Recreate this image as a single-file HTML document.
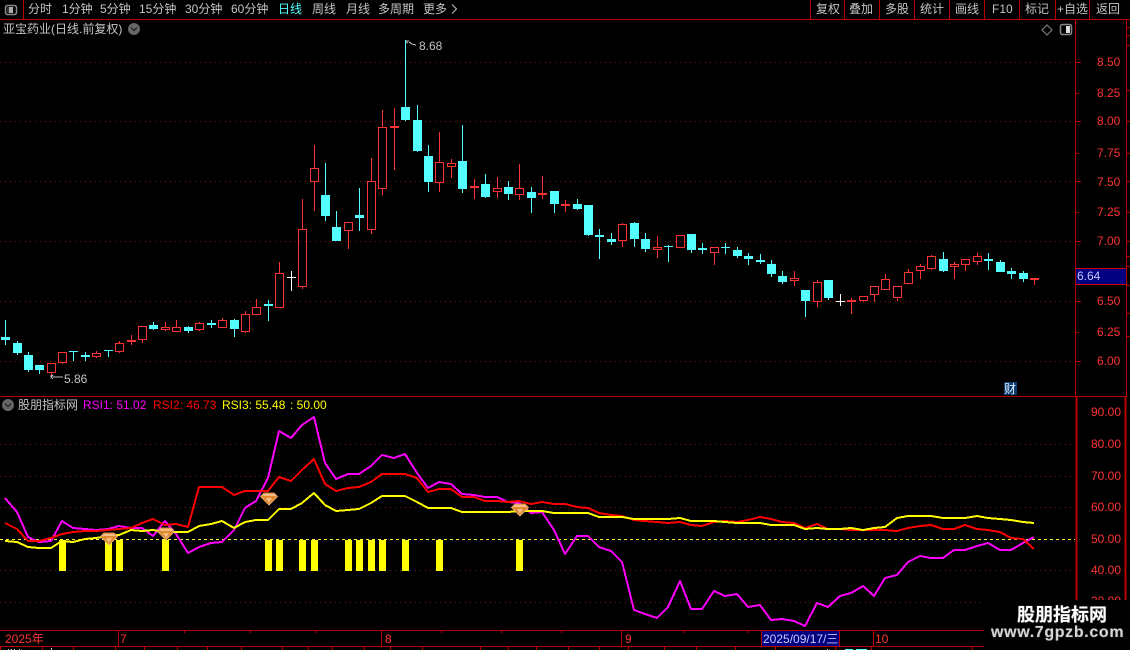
<!DOCTYPE html>
<html><head><meta charset="utf-8"><style>
html,body{margin:0;padding:0;background:#000;width:1130px;height:650px;overflow:hidden}
body{position:relative;font-family:"Liberation Sans","WenQuanYi Zen Hei","Noto Sans CJK SC",sans-serif;font-size:12px;color:#c4c4c4}
.t{position:absolute;white-space:nowrap;line-height:14px;height:14px}
.r{color:#ff3232}
svg{position:absolute;left:0;top:0}
</style></head><body>
<svg width="1130" height="650" viewBox="0 0 1130 650" shape-rendering="crispEdges">
<g stroke="#8a1212" stroke-width="1" stroke-dasharray="1 4" fill="none">
<path d="M0 62.5H1075M0 121.5H1075M0 181.5H1075M0 241.5H1075M0 301.5H1075M0 361.5H1075"/>
<path d="M0 444.5H1075M0 476.5H1075M0 507.5H1075M0 570.5H1075M0 602.5H1075"/>
</g>
<path d="M0 539.5H1075" stroke="#ffff40" stroke-dasharray="3 3" fill="none"/>
<g fill="none" stroke="#bb0000">
<path d="M0 19.5H1130M23.5 0V19M810.5 0V19M844.5 0V19M879.5 0V19M914.5 0V19M949.5 0V19M984.5 0V19M1019.5 0V19M1055.5 0V19M1089.5 0V19"/>
<path d="M1075.5 20V396M1126.5 20V396M0 396.5H1127"/>
<path d="M1076 397V600M1077 397V600M1125 397V600M1126 397V600"/>
<path d="M1076 62.5H1081M1076 93.5H1079M1076 121.5H1081M1076 153.5H1079M1076 181.5H1081M1076 212.5H1079M1076 241.5H1081M1076 301.5H1081M1076 332.5H1079M1076 361.5H1081"/>
<path d="M1127 27.5H1130M1127 35.5H1130M1127 45.5H1130M1127 241.5H1130M1127 256.5H1130M1127 266.5H1130M1127 285.5H1130M1127 313.5H1130M1127 336.5H1130M1127 90.5H1130M1127 121.5H1130M1127 153.5H1130M1127 181.5H1130M1127 212.5H1130"/>
<path d="M0 630.5H985M0 646.5H985M118.5 631V646M381.5 631V646M621.5 631V646M873.5 631V646"/>
<path d="M184.5 631V633M250.5 631V633M315.5 631V633M441.5 631V633M501.5 631V633M561.5 631V633M684.5 631V633M747.5 631V633"/>
<path d="M0.5 647V650M42.5 647V650M73.5 647V650M115.5 647V650M144.5 647V650M177.5 647V650M207.5 647V650M241.5 647V650M282.5 647V650M308.5 647V650M332.5 647V650M364.5 647V650M390.5 647V650M422.5 647V650M480.5 647V650M508.5 647V650M536.5 647V650M568.5 647V650M599.5 647V650M628.5 647V650M664.5 647V650M696.5 647V650M735.5 647V650M775.5 647V650M835.5 647V650M871.5 647V650M972.5 647V650"/>
</g>
<path d="M8.5 649V650M11.5 649V650M14.5 649V650M19.5 649V650M51.5 648V650M827.5 649V650" stroke="#d8d8d8" fill="none"/>
<path d="M845 649h8v1h-8zM856 649h11v1h-11z" fill="#54ffff"/>
<rect x="1076" y="268" width="50" height="17" fill="#000080"/>
<path d="M1076 268.5H1126M1076 284.5H1126" stroke="#cc0000" fill="none"/>
<rect x="761" y="631" width="78" height="15" fill="#000080"/>
<path d="M761.5 631V646M839.5 631V646" stroke="#bb0000" fill="none"/>
<rect x="1004" y="382" width="13" height="13" fill="#0a3a6e"/>

<!-- cyan wicks -->
<path stroke="#54ffff" fill="none" d="M5.5 320V345M17.5 341V355M28.5 352V372M39.5 365V374M73.5 351V361M85.5 352V361M108.5 350V357M153.5 322V330M188.5 326V333M211.5 320V328M234.5 319V337M268.5 300V321M325.5 163V221M336.5 211V241M359.5 188V231M405.5 40V121M417.5 105V152M428.5 145V192M462.5 125V193M485.5 174V198M508.5 181V200M531.5 187V213M554.5 191V213M577.5 199V210M588.5 205V236M599.5 229V259M611.5 233V245M634.5 222V247M645.5 233V252M668.5 245V262M691.5 234V253M702.5 243V254M725.5 243V254M737.5 247V258M748.5 253V265M760.5 254V264M771.5 260V277M782.5 271V284M805.5 290V317M828.5 280V300M943.5 252V272M988.5 253V270M1000.5 260V272M1011.5 268V279M1023.5 271V282"/>
<!-- cyan bodies -->
<path fill="#54ffff" d="M1 337h9v3h-9zM13 343h9v10h-9zM24 355h9v15h-9zM35 365h9v5h-9zM69 351h9v1h-9zM81 355h9v2h-9zM104 350h9v1h-9zM149 325h9v4h-9zM184 327h9v4h-9zM207 323h9v2h-9zM230 320h9v9h-9zM264 304h9v2h-9zM321 195h9v21h-9zM332 227h9v14h-9zM355 215h9v3h-9zM401 107h9v13h-9zM413 120h9v31h-9zM424 156h9v26h-9zM458 161h9v28h-9zM481 184h9v13h-9zM504 187h9v7h-9zM527 192h9v6h-9zM550 191h9v13h-9zM573 204h9v5h-9zM584 205h9v30h-9zM595 235h9v2h-9zM607 239h9v3h-9zM630 223h9v16h-9zM641 239h9v10h-9zM664 246h9v1h-9zM687 234h9v16h-9zM698 248h9v2h-9zM721 247h9v1h-9zM733 250h9v6h-9zM744 256h9v3h-9zM756 260h9v2h-9zM767 264h9v10h-9zM778 276h9v6h-9zM801 290h9v11h-9zM824 280h9v18h-9zM939 259h9v12h-9zM984 259h9v2h-9zM996 262h9v10h-9zM1007 271h9v3h-9zM1019 273h9v6h-9z"/>
<!-- white crosses -->
<path stroke="#fff" fill="none" d="M291.5 271V291M287 277.5H296M840.5 294V306M836 301.5H845"/>
<path stroke="#ff3232" fill="none" d="M47.5 363.5h8v9h-8zM51.5 373V377M58.5 352.5h8v10h-8zM62.5 363V364M92.5 353.5h8v3h-8zM96.5 351V353M96.5 357V358M115.5 343.5h8v8h-8zM119.5 341V343M119.5 352V353M127.5 340.5h8v1h-8zM131.5 335V340M131.5 342V345M138.5 326.5h8v13h-8zM142.5 340V343M161.5 327.5h8v2h-8zM165.5 322V327M165.5 330V331M172.5 327.5h8v4h-8zM176.5 320V327M195.5 323.5h8v6h-8zM199.5 322V323M199.5 330V331M218.5 320.5h8v7h-8zM222.5 318V320M241.5 314.5h8v17h-8zM245.5 311V314M245.5 332V333M252.5 307.5h8v7h-8zM256.5 299V307M275.5 273.5h8v34h-8zM279.5 262V273M298.5 229.5h8v57h-8zM302.5 199V229M302.5 287V289M310.5 168.5h8v13h-8zM314.5 145V168M314.5 182V211M344.5 222.5h8v8h-8zM348.5 231V249M367.5 181.5h8v48h-8zM371.5 158V181M371.5 230V234M378.5 127.5h8v61h-8zM382.5 110V127M382.5 189V195M390.5 126.5h8v1h-8zM394.5 108V126M394.5 128V170M435.5 162.5h8v20h-8zM439.5 132V162M439.5 183V192M447.5 163.5h8v3h-8zM451.5 159V163M451.5 167V178M470.5 186.5h8v1h-8zM474.5 179V186M474.5 188V199M493.5 188.5h8v3h-8zM497.5 177V188M497.5 192V198M515.5 188.5h8v6h-8zM519.5 164V188M519.5 195V200M538.5 193.5h8v1h-8zM542.5 176V193M542.5 195V199M561.5 204.5h8v1h-8zM565.5 200V204M565.5 206V212M618.5 224.5h8v16h-8zM622.5 223V224M622.5 241V247M653.5 247.5h8v2h-8zM657.5 236V247M657.5 250V258M676.5 235.5h8v12h-8zM710.5 247.5h8v5h-8zM714.5 253V265M790.5 278.5h8v2h-8zM794.5 271V278M794.5 281V286M813.5 282.5h8v19h-8zM817.5 280V282M817.5 302V307M847.5 300.5h8v1h-8zM851.5 298V300M851.5 302V314M859.5 296.5h8v4h-8zM863.5 301V302M870.5 286.5h8v8h-8zM874.5 295V302M881.5 279.5h8v10h-8zM885.5 274V279M893.5 286.5h8v11h-8zM897.5 298V301M904.5 272.5h8v11h-8zM908.5 269V272M916.5 266.5h8v4h-8zM920.5 264V266M920.5 271V279M927.5 256.5h8v12h-8zM931.5 255V256M931.5 269V270M950.5 264.5h8v2h-8zM954.5 262V264M954.5 267V279M961.5 259.5h8v5h-8zM965.5 265V271M973.5 256.5h8v5h-8zM977.5 253V256M977.5 262V265M1030.5 278.5h8v1h-8zM1034.5 280V285"/>
<!-- annotations -->
<path stroke="#c4c4c4" fill="none" d="M406 41h3M406 42l2 1M409 42l3 2 4 1M52 376h1M53 375l-2 2 2 2M53 377h10M51 377v-2"/>
<path d="M1047 25l5 5-5 5-5-5z" fill="none" stroke="#8a8a8a" shape-rendering="auto"/>
<rect x="1060.5" y="24.5" width="11" height="10" rx="2" fill="none" stroke="#8a8a8a" stroke-width="1.5" shape-rendering="auto"/><rect x="1066" y="26" width="4" height="7" fill="#ddd"/>
<rect x="5.5" y="5.5" width="11" height="9" rx="2" fill="none" stroke="#8a8a8a" stroke-width="1.5" shape-rendering="auto"/><rect x="7" y="7" width="2" height="6" fill="#333"/><rect x="9" y="7" width="4" height="6" fill="#aaa"/>
<path d="M452 4.5l4.5 4.5-4.5 4.5" fill="none" stroke="#c4c4c4" shape-rendering="auto"/>
<g shape-rendering="auto">
<circle cx="134" cy="29" r="6" fill="#666"/><path d="M131 27.5l3 3 3-3" fill="none" stroke="#1c1c1c" stroke-width="1.2"/>
<circle cx="8" cy="405" r="6" fill="#666"/><path d="M5 403.5l3 3 3-3" fill="none" stroke="#1c1c1c" stroke-width="1.2"/>
</g>
<!-- yellow bars -->
<path fill="#ffff00" d="M59 540h7v31h-7zM105 540h7v31h-7zM116 540h7v31h-7zM162 540h7v31h-7zM265 540h7v31h-7zM276 540h7v31h-7zM299 540h7v31h-7zM311 540h7v31h-7zM345 540h7v31h-7zM356 540h7v31h-7zM368 540h7v31h-7zM379 540h7v31h-7zM402 540h7v31h-7zM436 540h7v31h-7zM516 540h7v31h-7z"/>
<g fill="none" stroke-width="2" stroke-linejoin="round" shape-rendering="crispEdges">
<polyline stroke="#ff00ff" points="5,498 17,512 28,537 39,542 51,541 62,521 73,528 85,529 96,530 108,529 119,526 131,528 142,528 153,536 165,521 176,534 188,553 199,547 211,543 222,542 234,530 245,508 256,501 268,478 279,431 291,438 302,425 314,417 325,463 336,479 348,474 359,474 371,466 382,455 394,458 405,454 417,473 428,488 439,482 451,484 462,494 474,495 485,497 497,497 508,502 519,503 531,513 542,512 554,530 565,554 577,536 588,536 599,547 611,551 622,562 634,610 645,614 657,618 668,607 680,581 691,609 702,609 714,591 725,596 737,594 748,607 760,605 771,620 782,619 794,621 805,626 817,603 828,607 840,596 851,593 863,586 874,596 885,578 897,575 908,562 920,556 931,558 943,558 954,550 965,550 977,546 988,543 1000,550 1011,550 1023,543 1034,537"/>
<polyline stroke="#ff0000" points="5,523 17,529 28,541 39,541 51,538 62,534 73,532 85,531 96,531 108,530 119,529 131,528 142,523 153,519 165,525 176,524 188,527 199,487 211,487 222,487 234,495 245,491 256,491 268,491 279,477 291,481 302,470 314,459 325,484 336,491 348,488 359,487 371,482 382,474 394,474 405,474 417,478 428,492 439,489 451,489 462,497 474,497 485,501 497,501 508,502 519,501 531,504 542,502 554,504 565,504 577,507 588,508 599,513 611,515 622,516 634,520 645,521 657,522 668,523 680,522 691,525 702,526 714,522 725,521 737,522 748,520 760,517 771,519 782,522 794,523 805,528 817,524 828,529 840,529 851,530 863,530 874,530 885,530 897,531 908,528 920,526 931,525 943,529 954,529 965,525 977,529 988,530 1000,532 1011,538 1023,539 1034,549"/>
<polyline stroke="#ffff00" points="5,541 17,542 28,547 39,548 51,548 62,541 73,542 85,539 96,538 108,536 119,535 131,530 142,531 153,530 165,532 176,532 188,532 199,526 211,524 222,521 234,528 245,522 256,520 268,520 279,509 291,509 302,503 314,493 325,505 336,511 348,510 359,509 371,503 382,496 394,496 405,496 417,502 428,508 439,508 451,508 462,512 474,512 485,512 497,512 508,512 519,511 531,511 542,511 554,513 565,513 577,513 588,513 599,517 611,517 622,517 634,519 645,519 657,519 668,519 680,518 691,521 702,521 714,521 725,522 737,523 748,523 760,523 771,525 782,525 794,525 805,529 817,528 828,529 840,529 851,528 863,530 874,528 885,527 897,518 908,516 920,516 931,516 943,518 954,518 965,518 977,516 988,518 1000,519 1011,520 1023,522 1034,523"/>
</g>
<!-- gems -->
<g shape-rendering="auto">
<g><path d="M104 533h10l3.5 3.5-8.500 8.500-8.500-8.500z" fill="#e08a30" stroke="#f0b578" stroke-width=".8"/><path d="M104 534h10l2 2h-14zM106 538h6l-3 5z" fill="#f5bd85"/></g>
<g transform="translate(57,-5)"><path d="M104 533h10l3.5 3.5-8.500 8.500-8.500-8.500z" fill="#e08a30" stroke="#f0b578" stroke-width=".8"/><path d="M104 534h10l2 2h-14zM106 538h6l-3 5z" fill="#f5bd85"/></g>
<g transform="translate(160,-40)"><path d="M104 533h10l3.5 3.5-8.500 8.500-8.500-8.500z" fill="#e08a30" stroke="#f0b578" stroke-width=".8"/><path d="M104 534h10l2 2h-14zM106 538h6l-3 5z" fill="#f5bd85"/></g>
<g transform="translate(411,-29)"><path d="M104 533h10l3.5 3.5-8.500 8.500-8.500-8.500z" fill="#e08a30" stroke="#f0b578" stroke-width=".8"/><path d="M104 534h10l2 2h-14zM106 538h6l-3 5z" fill="#f5bd85"/></g>
</g>
<rect x="984" y="600" width="146" height="50" fill="#000"/>
</svg>

<div class="t" style="left:28px;top:2px">分时</div>
<div class="t" style="left:62px;top:2px">1分钟</div>
<div class="t" style="left:100px;top:2px">5分钟</div>
<div class="t" style="left:139px;top:2px">15分钟</div>
<div class="t" style="left:185px;top:2px">30分钟</div>
<div class="t" style="left:231px;top:2px">60分钟</div>
<div class="t" style="left:278px;top:2px;color:#54ffff">日线</div>
<div class="t" style="left:312px;top:2px">周线</div>
<div class="t" style="left:346px;top:2px">月线</div>
<div class="t" style="left:378px;top:2px">多周期</div>
<div class="t" style="left:423px;top:2px">更多</div>
<div class="t" style="left:816px;top:2px">复权</div>
<div class="t" style="left:849px;top:2px">叠加</div>
<div class="t" style="left:885px;top:2px">多股</div>
<div class="t" style="left:920px;top:2px">统计</div>
<div class="t" style="left:955px;top:2px">画线</div>
<div class="t" style="left:992px;top:2px">F10</div>
<div class="t" style="left:1025px;top:2px">标记</div>
<div class="t" style="left:1057px;top:2px">+自选</div>
<div class="t" style="left:1096px;top:2px">返回</div>
<div class="t" style="left:3px;top:22px">亚宝药业(日线.前复权)</div>
<div class="t" style="left:419px;top:39px">8.68</div>
<div class="t" style="left:64px;top:372px">5.86</div>

<div class="t r" style="left:1097px;top:55px">8.50</div>
<div class="t r" style="left:1097px;top:86px">8.25</div>
<div class="t r" style="left:1097px;top:114px">8.00</div>
<div class="t r" style="left:1097px;top:146px">7.75</div>
<div class="t r" style="left:1097px;top:175px">7.50</div>
<div class="t r" style="left:1097px;top:205px">7.25</div>
<div class="t r" style="left:1097px;top:234px">7.00</div>
<div class="t" style="left:1077px;top:269px;color:#c8c8ff">6.64</div>
<div class="t r" style="left:1097px;top:294px">6.50</div>
<div class="t r" style="left:1097px;top:325px">6.25</div>
<div class="t r" style="left:1097px;top:354px">6.00</div>
<div class="t" style="left:1004px;top:382px;color:#dfefff">财</div>

<div class="t" style="left:18px;top:398px">股朋指标网</div>
<div class="t" style="left:83px;top:398px;color:#ff00ff">RSI1: 51.02</div>
<div class="t" style="left:153px;top:398px;color:#ff0000">RSI2: 46.73</div>
<div class="t" style="left:222px;top:398px;color:#ffff00">RSI3: 55.48</div>
<div class="t" style="left:290px;top:398px;color:#ffff00">: 50.00</div>

<div class="t r" style="left:1091px;top:405px">90.00</div>
<div class="t r" style="left:1091px;top:437px">80.00</div>
<div class="t r" style="left:1091px;top:469px">70.00</div>
<div class="t r" style="left:1091px;top:500px">60.00</div>
<div class="t r" style="left:1091px;top:532px">50.00</div>
<div class="t r" style="left:1091px;top:563px">40.00</div>
<div class="t r" style="left:1091px;top:594px;height:6px;overflow:hidden">30.00</div>

<div class="t r" style="left:5px;top:632px">2025年</div>
<div class="t r" style="left:120px;top:632px">7</div>
<div class="t r" style="left:385px;top:632px">8</div>
<div class="t r" style="left:625px;top:632px">9</div>
<div class="t r" style="left:875px;top:632px">10</div>
<div class="t" style="left:763px;top:632px;color:#c8c8ff">2025/09/17/三</div>

<div class="t" style="left:1017px;top:604px;height:22px;line-height:22px;font-size:18px;font-weight:bold;color:#fff;text-shadow:0 0 1px #888">股朋指标网</div>
<div class="t" style="left:991px;top:624px;height:18px;line-height:18px;font-size:16px;font-weight:bold;color:#d4d4d4;letter-spacing:.65px;text-shadow:0 0 1px #777">www.7gpzb.com</div>
</body></html>
